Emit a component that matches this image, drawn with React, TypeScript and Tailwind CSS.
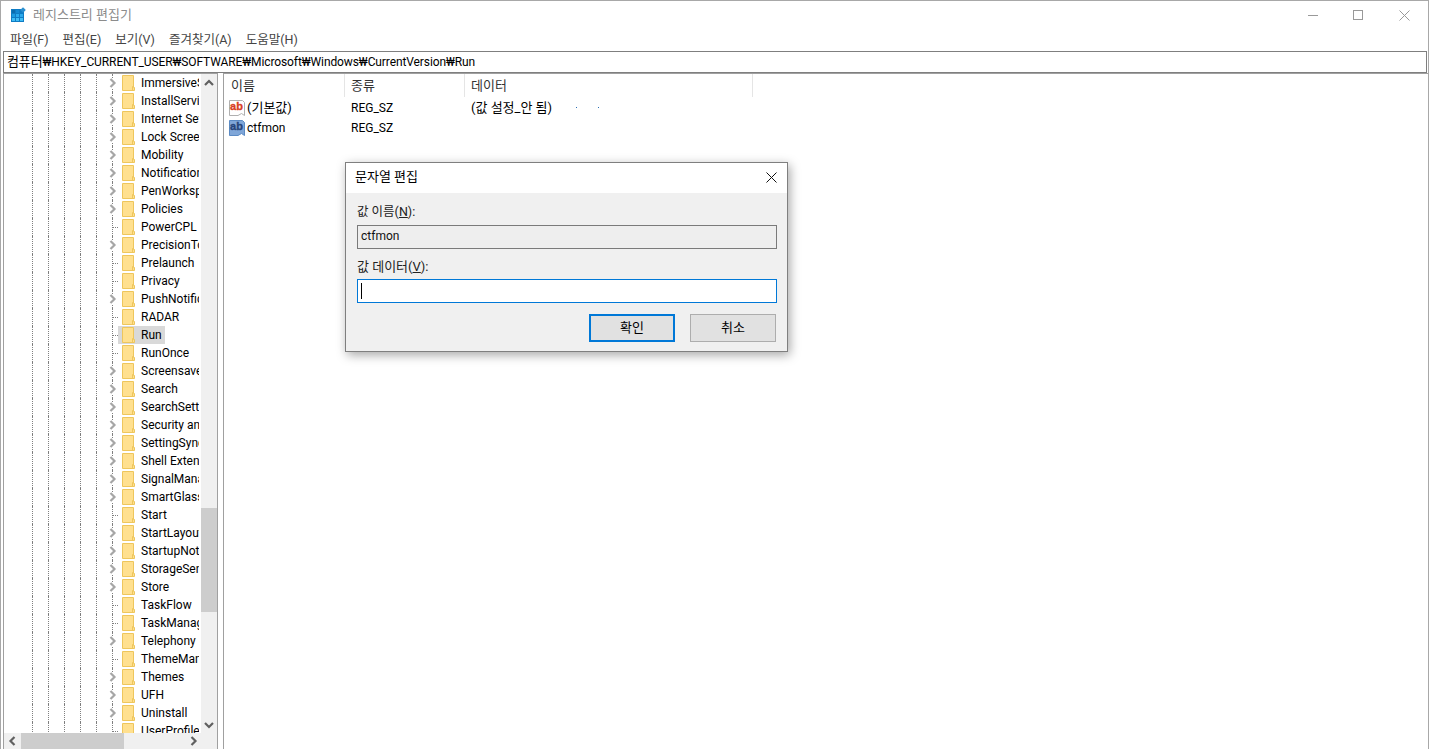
const font = { fontFamily: 'Roboto, "Noto Sans CJK KR", sans-serif' };

const treeRows: [string, boolean][] = [
  ['ImmersiveShell', true],
  ['InstallService', true],
  ['Internet Settings', true],
  ['Lock Screen', true],
  ['Mobility', true],
  ['Notifications', true],
  ['PenWorkspace', true],
  ['Policies', true],
  ['PowerCPL', false],
  ['PrecisionTouchPad', true],
  ['Prelaunch', false],
  ['Privacy', false],
  ['PushNotifications', true],
  ['RADAR', false],
  ['Run', false],
  ['RunOnce', false],
  ['Screensavers', true],
  ['Search', true],
  ['SearchSettings', true],
  ['Security and Maintenance', true],
  ['SettingSync', true],
  ['Shell Extensions', true],
  ['SignalManager', true],
  ['SmartGlass', true],
  ['Start', false],
  ['StartLayout', true],
  ['StartupNotify', true],
  ['StorageSense', true],
  ['Store', true],
  ['TaskFlow', false],
  ['TaskManager', false],
  ['Telephony', true],
  ['ThemeManager', false],
  ['Themes', true],
  ['UFH', true],
  ['Uninstall', true],
  ['UserProfileEngine', false],
];

function Chevron({ dir, className }: { dir: 'left' | 'right' | 'up' | 'down'; className?: string }) {
  const points = {
    left: '6.5,1 2.5,5 6.5,9',
    right: '3.5,1 7.5,5 3.5,9',
    up: '1,7 5,3 9,7',
    down: '1,3 5,7 9,3',
  }[dir];
  return (
    <svg width="10" height="10" viewBox="0 0 10 10" className={className}>
      <polyline points={points} fill="none" stroke="currentColor" strokeWidth="2.2" />
    </svg>
  );
}

function Folder() {
  return (
    <svg width="13" height="16" viewBox="0 0 13 16" className="shrink-0">
      <path d="M0.5 0.5H11.5V12.5H12.5V15.5H0.5Z" fill="#ffe08f" stroke="#eec65c" />
      <path d="M10.5 15V11.5H11.5" fill="none" stroke="#eec65c" />
    </svg>
  );
}

function TitleIcon() {
  return (
    <svg width="16" height="16" viewBox="0 0 16 16" className="shrink-0">
      <rect x="0" y="2" width="13" height="13" fill="#0f7cc4" />
      <rect x="1" y="3" width="3" height="3" fill="#0a6cae" />
      <rect x="5" y="3" width="3" height="3" fill="#1488d2" />
      <rect x="1" y="7" width="3" height="3" fill="#1c9be0" />
      <rect x="5" y="7" width="3" height="3" fill="#2aa9ec" />
      <rect x="9" y="7" width="3" height="3" fill="#2aa9ec" />
      <rect x="1" y="11" width="3" height="3" fill="#40bdf5" />
      <rect x="5" y="11" width="3" height="3" fill="#40bdf5" />
      <rect x="9" y="11" width="3" height="3" fill="#40bdf5" />
      <rect x="10" y="1" width="4" height="4" fill="#2b8fcf" transform="rotate(45 12 3)" />
    </svg>
  );
}

function ValueIcon({ kind }: { kind: 'default' | 'string' }) {
  const isDefault = kind === 'default';
  const ink = isDefault ? '#d8401f' : '#27457a';
  return (
    <svg width="16" height="18" viewBox="0 0 16 18" className="shrink-0">
      <path
        d="M0.5 1.5H13.5L15.5 3.5V16.5L12.5 14.5L9 16.5H0.5Z"
        fill={isDefault ? '#ffffff' : '#7fa6d8'}
        stroke={isDefault ? '#b0b0b0' : '#5b8ac4'}
      />
      <text
        x="7.5"
        y="11"
        textAnchor="middle"
        fontSize="11"
        fontWeight="700"
        fontFamily="Liberation Sans, sans-serif"
        fill={ink}
        stroke={ink}
        strokeWidth="0.35"
      >
        ab
      </text>
    </svg>
  );
}

function TreeRow({ name, expandable }: { name: string; expandable: boolean }) {
  const selected = name === 'Run';
  return (
    <div className="flex h-[18px] shrink-0 items-center">
      {[0, 1, 2, 3, 4].map((g) => (
        <span key={g} className="h-full w-4 shrink-0 border-l border-dotted border-[#808080]" />
      ))}
      <span className="flex h-full w-[6px] shrink-0 items-center border-l border-dotted border-[#808080]">
        {expandable ? (
          <span className="-ml-[6px] shrink-0 bg-white text-[#a6a6a6]">
            <Chevron dir="right" />
          </span>
        ) : (
          <span className="w-[5px] border-t border-dotted border-[#808080]" />
        )}
      </span>
      <div className={`flex h-full items-center gap-[6px] pl-1 pr-[3px] ${selected ? 'bg-[#d9d9d9]' : ''}`}>
        <Folder />
        <span className="text-[12px] whitespace-nowrap text-black">{name}</span>
      </div>
    </div>
  );
}

function EditDialog() {
  return (
    <div className="absolute top-[161px] left-[344px] flex h-[190px] w-[443px] flex-col border border-[#7f7f7f] bg-[#f0f0f0] shadow-[2px_3px_10px_rgba(0,0,0,0.35)]">
      <div className="flex h-[30px] items-center justify-between bg-white pr-[10px] pb-[2px] pl-[9px]">
        <span className="text-[13px] text-black">문자열 편집</span>
        <svg width="11" height="11" viewBox="0 0 11 11">
          <path d="M0.5 0.5L10.5 10.5M10.5 0.5L0.5 10.5" stroke="#111" strokeWidth="1" />
        </svg>
      </div>
      <div className="flex flex-col px-[11px] pt-[8px]">
        <div className="flex h-[22px] items-center text-[12.5px] text-[#222]">
          값 이름(<span className="underline">N</span>):
        </div>
        <div className="mt-[2px] flex h-[24px] w-[420px] items-center border border-[#7a7a7a] bg-[#eeeeee] pb-[2px] pl-[3px] text-[12px] text-[#111]">
          ctfmon
        </div>
        <div className="mt-[7px] flex h-[22px] items-center text-[13px] text-[#222]">
          값 데이터(<span className="underline">V</span>):
        </div>
        <div className="mt-[1px] flex h-[24px] w-[420px] items-center border border-[#0078d7] bg-white pl-[3px]">
          <span className="h-[16px] w-px bg-black" />
        </div>
        <div className="mt-[11px] flex justify-end gap-[15px]">
          <div className="flex h-[28px] w-[86px] items-center justify-center border-2 border-[#0078d7] bg-[#e1e1e1] text-[13px] text-black">
            확인
          </div>
          <div className="flex h-[28px] w-[86px] items-center justify-center border border-[#adadad] bg-[#e1e1e1] text-[13px] text-black">
            취소
          </div>
        </div>
      </div>
    </div>
  );
}

export default function App() {
  return (
    <div className="relative flex h-[749px] w-[1429px] flex-col overflow-hidden border-t border-r border-l border-[#a8a8a8] bg-white" style={font}>
      {/* title bar */}
      <div className="flex h-[28px] shrink-0 items-center justify-between pl-[10px]">
        <div className="flex items-center gap-[6px]">
          <TitleIcon />
          <span className="text-[13px] text-[#8c8c8c]">레지스트리 편집기</span>
        </div>
        <div className="flex items-center">
          <div className="flex w-[46px] justify-center">
            <span className="h-px w-[10px] bg-[#999999]" />
          </div>
          <div className="flex w-[46px] justify-center pr-[2px]">
            <span className="h-[10px] w-[10px] border border-[#999999]" />
          </div>
          <div className="flex w-[46px] justify-center pr-[2px]">
            <svg width="11" height="11" viewBox="0 0 11 11">
              <path d="M0.5 0.5L10.5 10.5M10.5 0.5L0.5 10.5" stroke="#999999" />
            </svg>
          </div>
        </div>
      </div>

      {/* menu */}
      <div className="flex h-[22px] shrink-0 items-center gap-[14px] pl-[9px] text-[12.5px] text-[#444]">
        <span>파일(F)</span>
        <span>편집(E)</span>
        <span>보기(V)</span>
        <span>즐겨찾기(A)</span>
        <span>도움말(H)</span>
      </div>

      {/* address */}
      <div className="mr-[1px] ml-[2px] flex h-[22px] shrink-0 items-center border border-[#7f7f7f] pl-[3px] text-[12px] tracking-[-0.1px] text-black">
        <span className="text-[13px]">컴퓨터</span>₩HKEY_CURRENT_USER₩SOFTWARE₩Microsoft₩Windows₩CurrentVersion₩Run
      </div>

      <div className="flex min-h-0 flex-1">
        {/* tree pane */}
        <div className="ml-[2px] flex w-[215px] shrink-0 flex-col border-t border-r border-l border-[#a0a0a0]">
          <div className="flex min-h-0 flex-1">
            <div className="flex w-[197px] shrink-0 flex-col overflow-hidden border-r-2 border-white pl-[28px]">
              {treeRows.map(([name, expandable]) => (
                <TreeRow key={name} name={name} expandable={expandable} />
              ))}
            </div>
            <div className="flex w-[16px] shrink-0 flex-col bg-[#f0f0f0] text-[#606060]">
              <div className="flex h-[17px] items-center justify-center">
                <Chevron dir="up" />
              </div>
              <div className="min-h-0 flex-1 pt-[417px]">
                <div className="h-[104px] bg-[#cdcdcd]" />
              </div>
              <div className="flex h-[17px] items-center justify-center">
                <Chevron dir="down" />
              </div>
            </div>
          </div>
          <div className="flex h-[16px] shrink-0 items-center bg-[#f0f0f0] text-[#606060]">
            <div className="flex w-[17px] justify-center">
              <Chevron dir="left" />
            </div>
            <div className="h-full w-[103px] bg-[#cdcdcd]" />
            <div className="flex-1" />
            <div className="flex w-[17px] justify-center">
              <Chevron dir="right" />
            </div>
            <div className="w-[16px]" />
          </div>
        </div>

        {/* list pane */}
        <div className="ml-[5px] flex min-w-0 flex-1 flex-col border-t border-l border-[#a0a0a0] text-[12px]">
          <div className="flex h-[23px] shrink-0 items-center text-[13px] text-[#333]">
            <span className="flex h-full w-[121px] items-center border-r border-[#e5e5e5] pl-[7px]">이름</span>
            <span className="flex h-full w-[120px] items-center border-r border-[#e5e5e5] pl-[6px]">종류</span>
            <span className="flex h-full w-[288px] items-center border-r border-[#e5e5e5] pl-[6px]">데이터</span>
          </div>
          <div className="flex h-[21px] items-center text-black">
            <span className="flex w-[121px] items-center gap-[2px] pl-[5px]">
              <ValueIcon kind="default" />
              <span className="text-[13px]">(기본값)</span>
            </span>
            <span className="w-[120px] pl-[6px]">REG_SZ</span>
            <span className="pl-[6px] text-[13px]">(값 설정_안 됨)</span>
            <span className="ml-[24px] h-px w-px bg-[#2a6fb5]" />
            <span className="ml-[21px] h-px w-px bg-[#2a6fb5]" />
          </div>
          <div className="flex h-[20px] items-center text-black">
            <span className="flex w-[121px] items-center gap-[2px] pl-[5px]">
              <ValueIcon kind="string" />
              ctfmon
            </span>
            <span className="w-[120px] pl-[6px]">REG_SZ</span>
          </div>
        </div>
      </div>

      <EditDialog />
    </div>
  );
}
